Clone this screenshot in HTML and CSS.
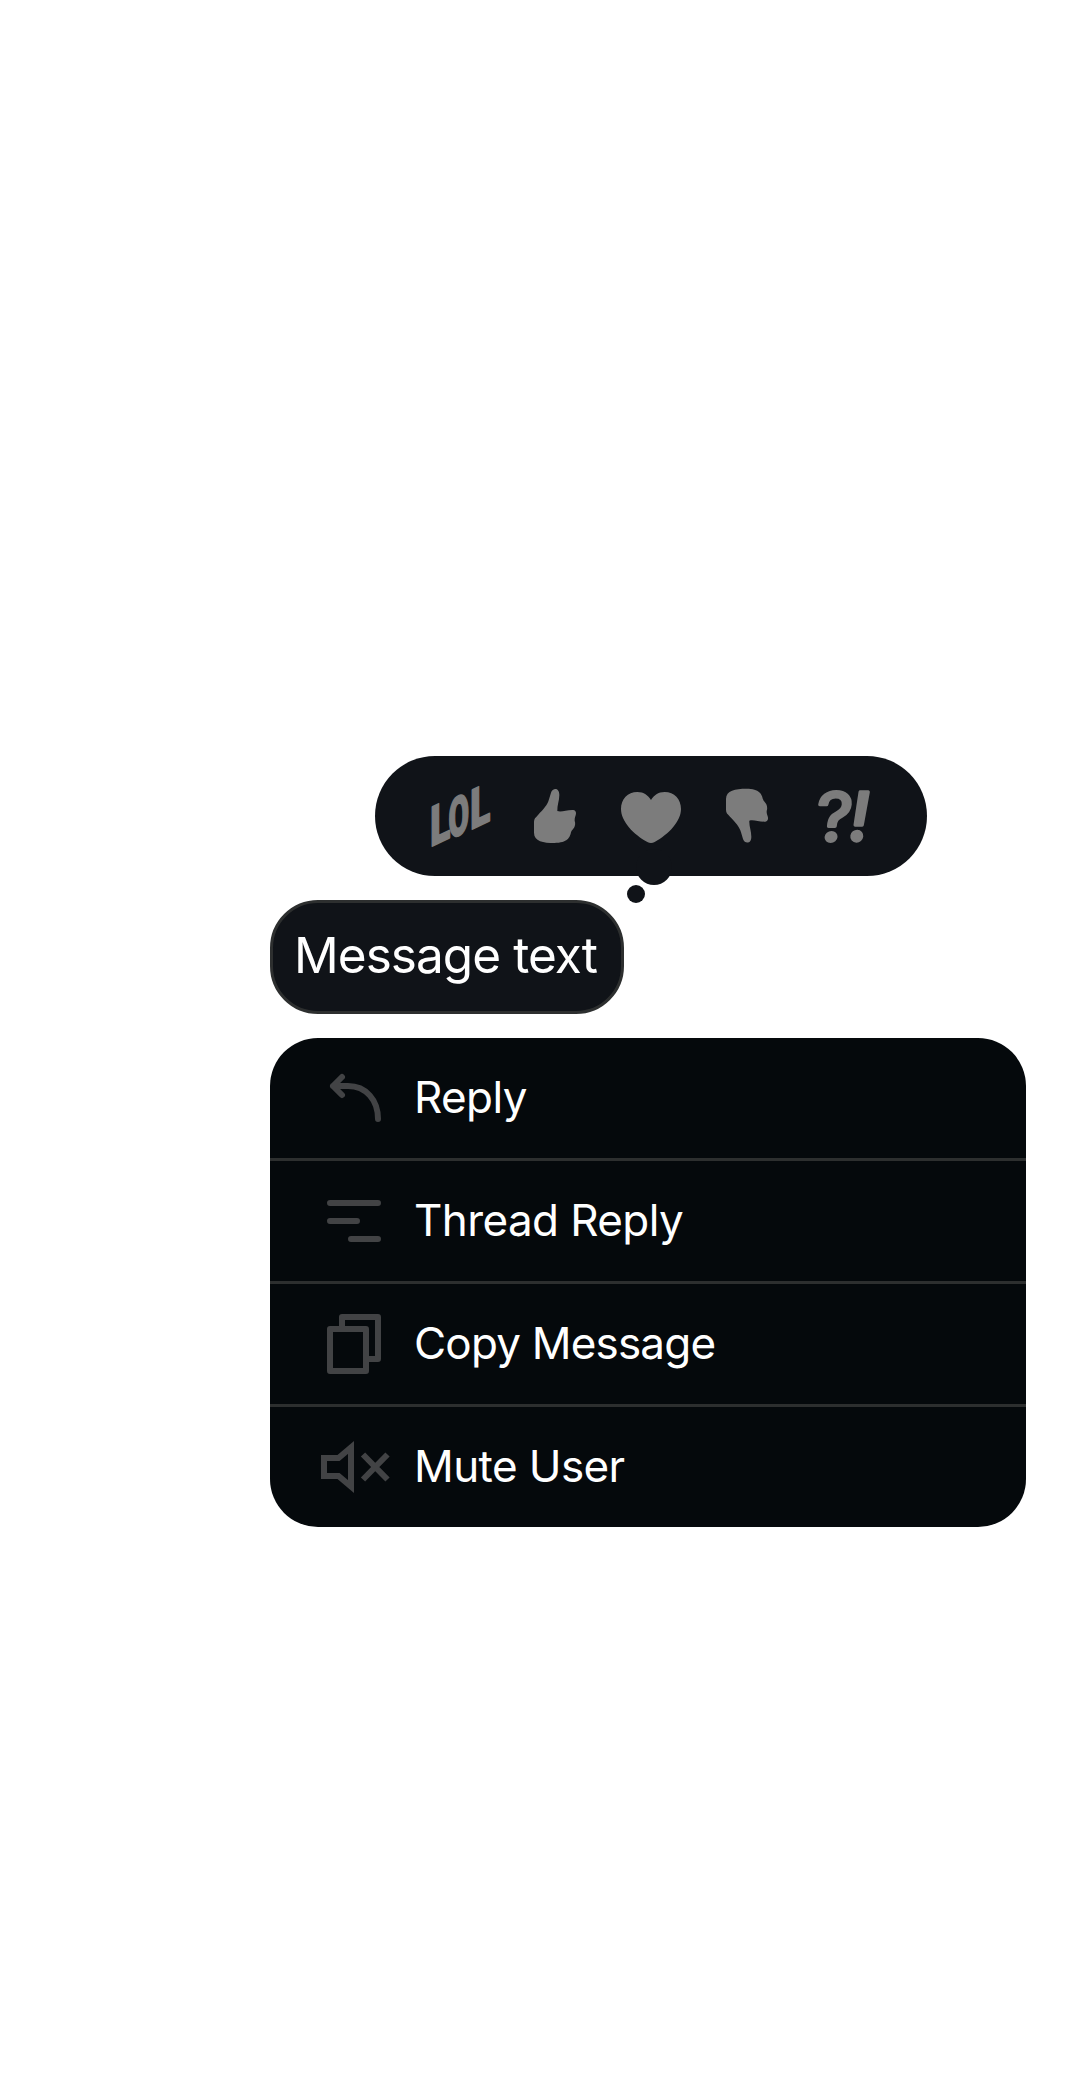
FILE: index.html
```html
<!DOCTYPE html>
<html lang="en">
<head>
<meta charset="utf-8">
<title>Message actions</title>
<link rel="stylesheet" href="styles.css">
</head>
<body>
<main class="overlay">
  <div class="reactions">
    <svg class="reaction" viewBox="0 0 60 60"><g class="lol"><text transform="matrix(.67 -.32 0 1 1.3 61)">L</text><text transform="matrix(.54 -.21 0 1 19.4 53.3)">O</text><text transform="matrix(.67 -.32 0 1 41.2 44)">L</text></g></svg>
    <svg class="reaction" viewBox="0 0 180 180"><path d="M78 20C83 5 103 4 103 27C103 45 96 58 97 75C110 79 125 71 145 72C152 73 155 80 152 88C149 96 149 99 149 104C152 112 150 119 148 124C145 130 140 132 138 139C135 154 128 171 88 171C55 171 27 166 27 140V108C27 98 31 96 39 87C55 70 68 57 72 40Z"/></svg>
    <svg class="reaction" viewBox="0 0 180 180"><path d="M90 42C81 28 69 18 49 18C20 18 0 39 0 69C0 106 37 145 79 168Q90 174 101 168C143 145 180 106 180 69C180 39 160 18 131 18C111 18 99 28 90 42Z"/></svg>
    <svg class="reaction" viewBox="0 0 180 180"><path transform="matrix(1 0 0 -1 0 179)" d="M78 20C83 5 103 4 103 27C103 45 96 58 97 75C110 79 125 71 145 72C152 73 155 80 152 88C149 96 149 99 149 104C152 112 150 119 148 124C145 130 140 132 138 139C135 154 128 171 88 171C55 171 27 166 27 140V108C27 98 31 96 39 87C55 70 68 57 72 40Z"/></svg>
    <svg class="reaction" viewBox="0 0 60 60"><g class="huh"><text transform="matrix(1.06 0 -.08 1 1.2 55)">?</text><text class="bang" x="36" y="55">!</text></g></svg>
    <span class="tail"></span>
    <span class="tail-dot"></span>
  </div>
  <div class="bubble"><span class="bubble-text">Message text</span></div>
  <ul class="menu">
    <li class="item">
      <svg class="icon" viewBox="0 0 72 72"><path class="round" d="M24 15L15 24L24 33M15 24H30C48 24 60 38 60 57"/></svg>
      <span class="label">Reply</span>
    </li>
    <li class="item">
      <svg class="icon" viewBox="0 0 72 72"><path class="round" d="M12 18H60M12 36H39M33 54H60"/></svg>
      <span class="label">Thread Reply</span>
    </li>
    <li class="item">
      <svg class="icon" viewBox="0 0 72 72"><path class="join" d="M12 21H48V63H12ZM24 18V9H60V51H51"/></svg>
      <span class="label label-copy">Copy Message</span>
    </li>
    <li class="item">
      <svg class="icon" viewBox="0 0 72 72"><path d="M6 27H20.5L33 16.5V55.5L20.5 45H6ZM45 23.5L69.5 48.5M69.5 23.5L45 48.5"/></svg>
      <span class="label">Mute User</span>
    </li>
  </ul>
</main>
</body>
</html>
```

FILE: styles.css
```css
body {
  margin: 0;
  background: #fff;
  color: #fff;
  font-family: Inter, "Liberation Sans", sans-serif;
}

.overlay {
  display: flex;
  flex-direction: column;
  align-items: flex-start;
  gap: 24px;
  box-sizing: border-box;
  min-height: 2100px;
  padding: 756px 54px 0 270px;
}

.reactions {
  position: relative;
  display: flex;
  align-items: center;
  gap: 36px;
  box-sizing: border-box;
  width: 552px;
  height: 120px;
  margin-left: 105px;
  padding: 0 54px;
  border-radius: 60px;
  background: #101318;
}

.reaction {
  flex: none;
  width: 60px;
  height: 60px;
  overflow: visible;
  fill: #7c7c7c;
}

.lol {
  font: 900 55px Roboto, sans-serif;
  stroke: #7c7c7c;
  stroke-width: 2px;
  stroke-linejoin: round;
}

.huh {
  font: 400 67px Inter, sans-serif;
  stroke: #7c7c7c;
  stroke-width: 3.4px;
  stroke-linejoin: round;
}

.bang {
  font-style: italic;
  font-weight: 500;
}

.tail,
.tail-dot {
  position: absolute;
  border-radius: 50%;
  background: #101318;
}

.tail {
  left: 261px;
  top: 93px;
  width: 36px;
  height: 36px;
}

.tail-dot {
  left: 252px;
  top: 129px;
  width: 18px;
  height: 18px;
}

.bubble {
  display: flex;
  align-items: center;
  box-sizing: border-box;
  width: 354px;
  height: 114px;
  padding-left: 20px;
  border: 3px solid #2d2f2f;
  border-radius: 48px;
  background: #101318;
  font-size: 49.5px;
  letter-spacing: -0.95px;
  white-space: nowrap;
}

.bubble-text {
  padding: 0 0 4px 1px;
}

.menu {
  box-sizing: border-box;
  width: 756px;
  margin: 0;
  padding: 0;
  overflow: hidden;
  border-radius: 48px;
  background: #05090c;
  list-style: none;
  font-size: 44px;
  letter-spacing: -0.6px;
}

.item {
  display: flex;
  align-items: center;
  gap: 24px;
  height: 120px;
  padding-left: 48px;
  white-space: nowrap;
}

.item + .item {
  border-top: 3px solid #2d2f2f;
}

.label {
  padding-bottom: 2px;
}

.label-copy {
  letter-spacing: -0.8px;
}

.icon {
  flex: none;
  width: 72px;
  height: 72px;
  fill: none;
  stroke: #424345;
  stroke-width: 6px;
}

.round {
  stroke-linecap: round;
  stroke-linejoin: round;
}

.join {
  stroke-linejoin: round;
}
```
